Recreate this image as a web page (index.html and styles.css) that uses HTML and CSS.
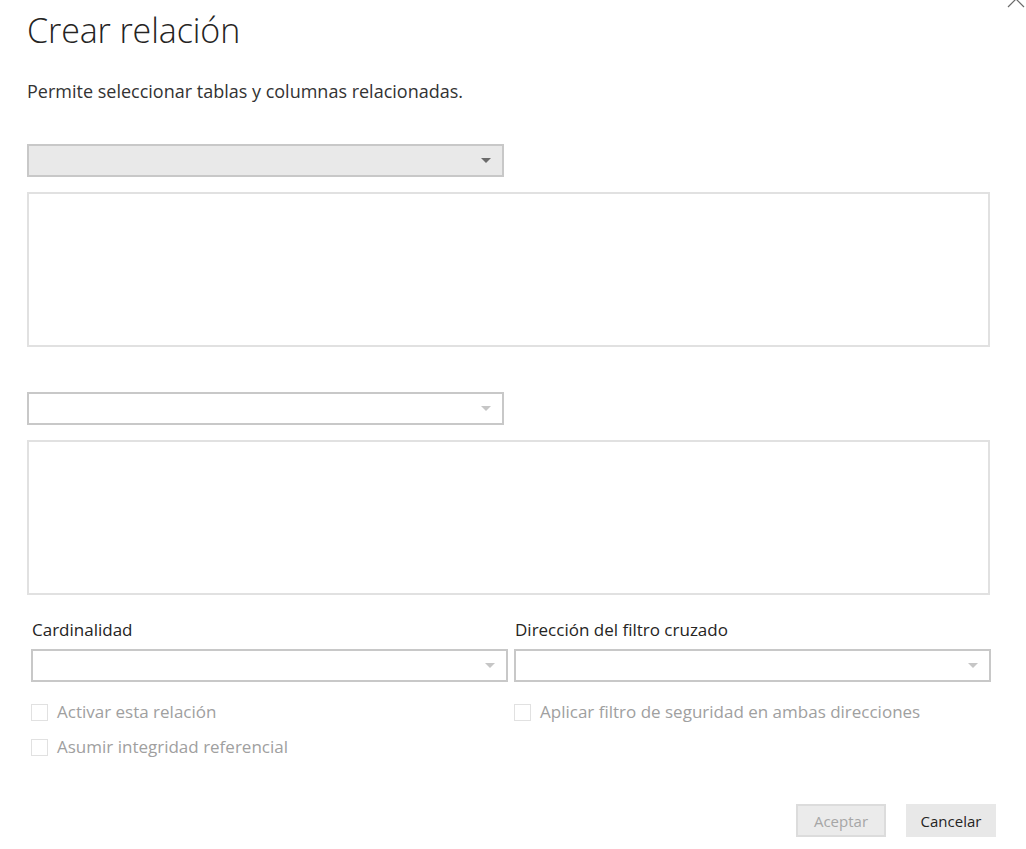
FILE: index.html
```html
<!DOCTYPE html>
<html lang="es">
<head>
<meta charset="utf-8">
<title>Crear relación</title>
<link rel="stylesheet" href="styles.css">
</head>
<body>
<div class="dialog">
  <svg class="close" width="20" height="20" viewBox="0 0 20 20"><path d="M2 2 L18 18 M18 2 L2 18" stroke="#6a6a6a" stroke-width="1.2" fill="none"/></svg>
  <h1 class="title">Crear relación</h1>
  <p class="subtitle">Permite seleccionar tablas y columnas relacionadas.</p>

  <div class="select select-active"><span class="arrow arrow-dark"></span></div>
  <div class="listbox"></div>

  <div class="select select-second"><span class="arrow"></span></div>
  <div class="listbox"></div>

  <div class="options">
    <div class="col">
      <div class="label">Cardinalidad</div>
      <div class="select select-small"><span class="arrow"></span></div>
      <label class="check"><span class="box"></span>Activar esta relación</label>
      <label class="check"><span class="box"></span>Asumir integridad referencial</label>
    </div>
    <div class="col">
      <div class="label">Dirección del filtro cruzado</div>
      <div class="select select-small"><span class="arrow"></span></div>
      <label class="check"><span class="box"></span>Aplicar filtro de seguridad en ambas direcciones</label>
    </div>
  </div>

  <div class="buttons">
    <button class="btn btn-disabled">Aceptar</button>
    <button class="btn">Cancelar</button>
  </div>
</div>
</body>
</html>
```
FILE: styles.css
```css
html, body {
  margin: 0;
  padding: 0;
  background: #ffffff;
}
body {
  font-family: "Open Sans", "Noto Sans", sans-serif;
  color: #333333;
}
.dialog {
  position: relative;
  width: 1026px;
  height: 849px;
  box-sizing: border-box;
  padding: 0 0 0 27px;
  overflow: hidden;
}
.close {
  position: absolute;
  left: 1006px;
  top: -11px;
}
.title {
  margin: 0;
  padding-top: 8px;
  font-size: 34px;
  line-height: 44px;
  font-weight: 300;
  color: #252423;
  letter-spacing: -0.1px;
}
.subtitle {
  margin: 26px 0 0 0;
  font-size: 18px;
  line-height: 26px;
  color: #333;
}
.select {
  position: relative;
  width: 477px;
  height: 33px;
  box-sizing: border-box;
  border: 2px solid #c8c8c8;
  background: #fff;
}
.select-active {
  margin-top: 40px;
  background: #e9e9e9;
}
.select-second {
  margin-top: 45px;
}
.arrow {
  position: absolute;
  right: 11px;
  top: 12px;
  width: 0;
  height: 0;
  border-left: 5px solid transparent;
  border-right: 5px solid transparent;
  border-top: 5px solid #c6c6c6;
}
.arrow-dark {
  border-top-color: #6b6b6b;
}
.listbox {
  width: 963px;
  height: 155px;
  box-sizing: border-box;
  border: 2px solid #e1e1e1;
  margin-top: 15px;
}
.options {
  display: flex;
  gap: 6px;
  margin-top: 24px;
  padding-left: 4px;
}
.col {
  display: flex;
  flex-direction: column;
  width: 477px;
}
.label {
  font-size: 17px;
  line-height: 22px;
  color: #252423;
  padding-left: 1px;
}
.select-small {
  margin-top: 8px;
  height: 33px;
}
.check {
  display: flex;
  align-items: center;
  font-size: 17px;
  line-height: 22px;
  color: #a0a0a0;
  height: 22px;
  margin-top: 19px;
}
.check + .check {
  margin-top: 13px;
}
.box {
  display: inline-block;
  width: 17px;
  height: 17px;
  box-sizing: border-box;
  border: 1px solid #e1e1e1;
  margin-right: 9px;
}
.buttons {
  position: absolute;
  left: 796px;
  top: 804px;
  display: flex;
  gap: 20px;
}
.btn {
  width: 90px;
  height: 33px;
  box-sizing: border-box;
  border: 2px solid #e8e8e8;
  background: #e8e8e8;
  font-family: "Open Sans", "Noto Sans", sans-serif;
  font-size: 15px;
  color: #252423;
  padding: 0;
}
.btn-disabled {
  background: #ebebeb;
  border-color: #dcdcdc;
  color: #a6a6a6;
}
```
